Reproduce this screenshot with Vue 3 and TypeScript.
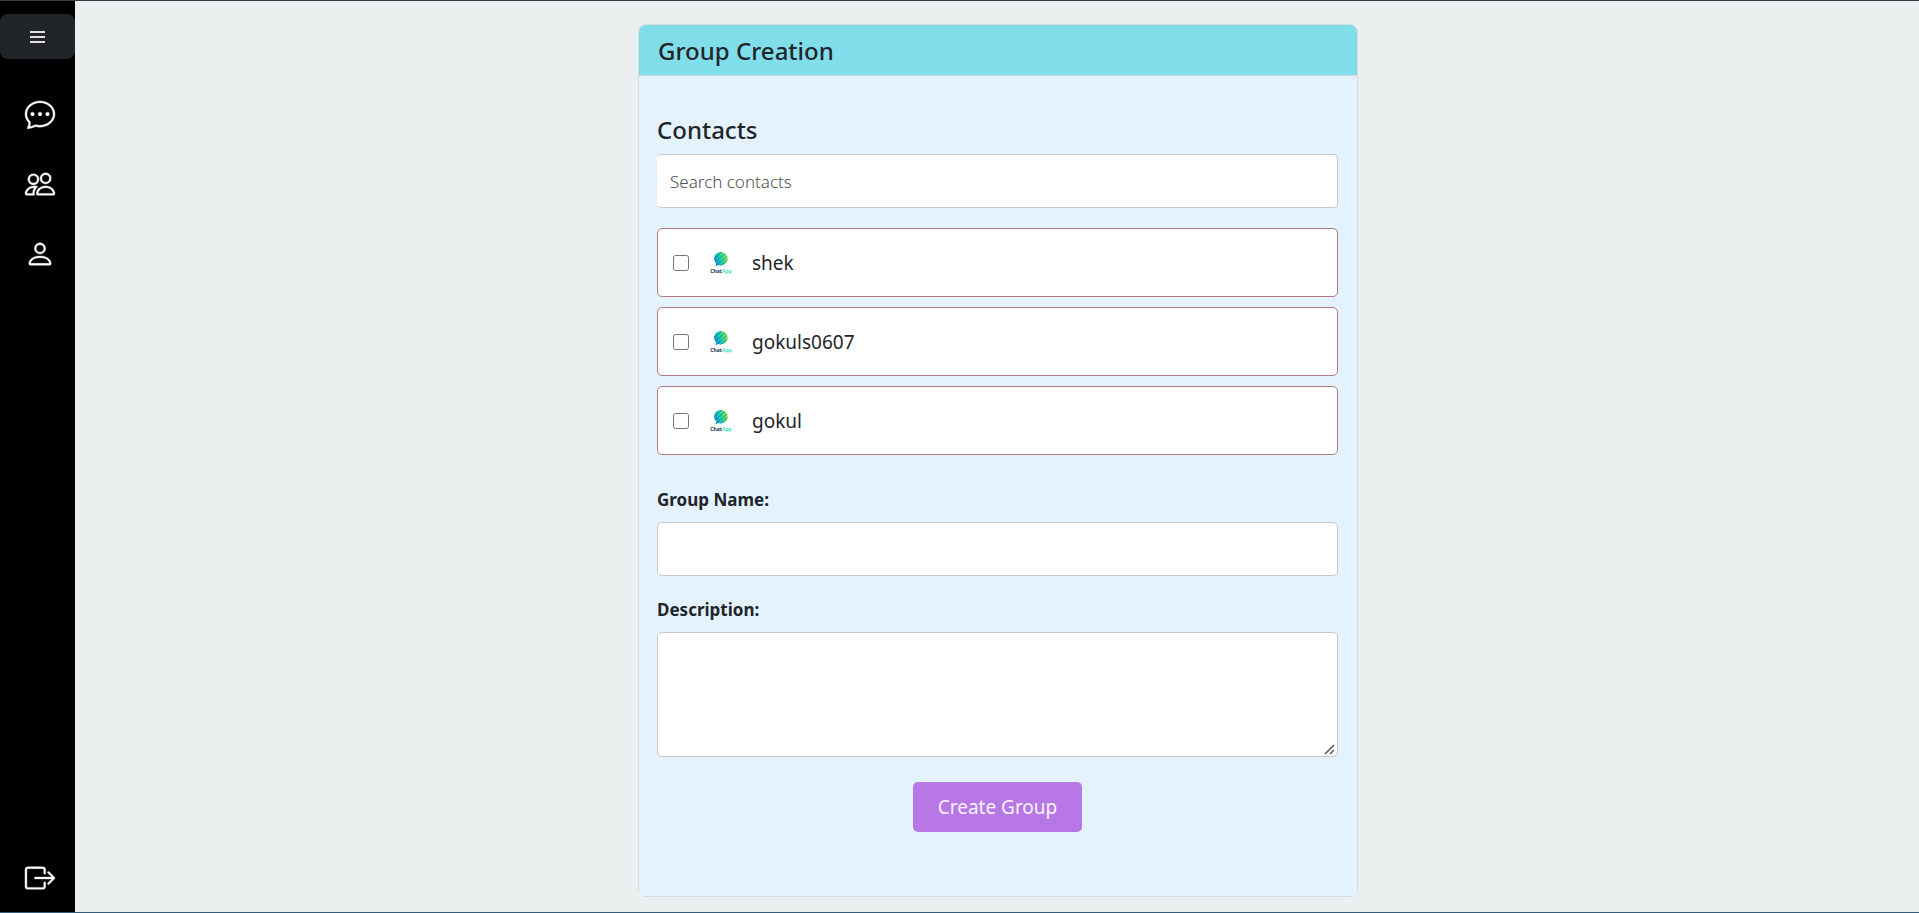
<script setup lang="ts">
import { ref } from 'vue'

interface NavItem {
  label: string
  paths: string[]
}

interface Contact {
  id: number
  name: string
}

const navItems: NavItem[] = [
  {
    label: 'Chats',
    paths: [
      'M5 8a1 1 0 1 1-2 0 1 1 0 0 1 2 0m4 0a1 1 0 1 1-2 0 1 1 0 0 1 2 0m3 1a1 1 0 1 0 0-2 1 1 0 0 0 0 2',
      'm2.165 15.803.02-.004c1.83-.363 2.948-.842 3.468-1.105A9 9 0 0 0 8 15c4.418 0 8-3.134 8-7s-3.582-7-8-7-8 3.134-8 7c0 1.76.743 3.37 1.97 4.6a10.4 10.4 0 0 1-.524 2.318l-.003.011a11 11 0 0 1-.244.637c-.079.186.074.394.273.362a22 22 0 0 0 .693-.125m.8-3.108a1 1 0 0 0-.287-.801C1.618 10.83 1 9.468 1 8c0-3.192 3.004-6 7-6s7 2.808 7 6-3.004 6-7 6a8 8 0 0 1-2.088-.272 1 1 0 0 0-.711.074c-.387.196-1.24.57-2.634.893a11 11 0 0 0 .398-2',
    ],
  },
  {
    label: 'Groups',
    paths: [
      'M15 14s1 0 1-1-1-4-5-4-5 3-5 4 1 1 1 1zm-7.978-1L7 12.996c.001-.264.167-1.03.76-1.72C8.312 10.629 9.282 10 11 10c1.717 0 2.687.63 3.24 1.276.593.69.758 1.457.76 1.72l-.008.002-.014.002zM11 7a2 2 0 1 0 0-4 2 2 0 0 0 0 4m3-2a3 3 0 1 1-6 0 3 3 0 0 1 6 0M6.936 9.28a6 6 0 0 0-1.23-.247A7 7 0 0 0 5 9c-4 0-5 3-5 4q0 1 1 1h4.216A2.24 2.24 0 0 1 5 13c0-1.01.377-2.042 1.09-2.904.243-.294.526-.569.846-.816M4.92 10A5.5 5.5 0 0 0 4 13H1c0-.26.164-1.03.76-1.724.545-.636 1.492-1.256 3.16-1.275ZM1.5 5.5a3 3 0 1 1 6 0 3 3 0 0 1-6 0m3-2a2 2 0 1 0 0 4 2 2 0 0 0 0-4',
    ],
  },
  {
    label: 'Profile',
    paths: [
      'M8 8a3 3 0 1 0 0-6 3 3 0 0 0 0 6m2-3a2 2 0 1 1-4 0 2 2 0 0 1 4 0m4 8c0 1-1 1-1 1H3s-1 0-1-1 1-4 6-4 6 3 6 4m-1-.004c-.001-.246-.154-.986-.832-1.664C11.516 10.68 10.289 10 8 10s-3.516.68-4.168 1.332c-.678.678-.83 1.418-.832 1.664z',
    ],
  },
]

const contacts: Contact[] = [
  { id: 1, name: 'shek' },
  { id: 2, name: 'gokuls0607' },
  { id: 3, name: 'gokul' },
]

const search = ref('')
const selected = ref<number[]>([])
const groupName = ref('')
const description = ref('')
</script>

<template>
  <div class="app">
    <aside class="sidebar">
      <button class="menu" type="button" aria-label="Menu">
        <svg width="15" height="12" viewBox="0 0 15 12" aria-hidden="true">
          <path d="M0 0h15v2H0zM0 5h15v2H0zM0 10h15v2H0z" fill="currentColor" />
        </svg>
      </button>
      <nav class="nav">
        <a v-for="item in navItems" :key="item.label" href="#" :aria-label="item.label">
          <svg class="icon" viewBox="0 0 16 16" aria-hidden="true">
            <path v-for="d in item.paths" :key="d" :d="d" />
          </svg>
        </a>
      </nav>
      <a class="logout" href="#" aria-label="Log out">
        <svg class="icon" viewBox="0 0 16 16" aria-hidden="true">
          <path
            d="M10 12.5a.5.5 0 0 1-.5.5h-8a.5.5 0 0 1-.5-.5v-9a.5.5 0 0 1 .5-.5h8a.5.5 0 0 1 .5.5v2a.5.5 0 0 0 1 0v-2A1.5 1.5 0 0 0 9.500 2h-8A1.500 1.500 0 0 0 0 3.500v9A1.500 1.500 0 0 0 1.500 14h8a1.500 1.500 0 0 0 1.500-1.500v-2a.5.5 0 0 0-1 0z"
          />
          <path
            d="M15.854 8.354a.5.5 0 0 0 0-.708l-3-3a.5.5 0 0 0-.708.708L14.293 7.5H5.5a.5.5 0 0 0 0 1h8.793l-2.147 2.146a.5.5 0 0 0 .708.708z"
          />
        </svg>
      </a>
    </aside>

    <main class="main">
      <section class="card">
        <header class="card-header">
          <h1>Group Creation</h1>
        </header>
        <form class="card-body" @submit.prevent>
          <h2 id="contacts-title">Contacts</h2>
          <input
            v-model="search"
            class="field search"
            type="text"
            placeholder="Search contacts"
            aria-labelledby="contacts-title"
          />
          <ul class="contacts">
            <li v-for="contact in contacts" :key="contact.id">
              <label class="contact">
                <input v-model="selected" type="checkbox" :value="contact.id" />
                <svg class="avatar" viewBox="0 0 24 24" aria-hidden="true">
                  <defs>
                    <linearGradient :id="`ball-${contact.id}`" x1="0" y1="0.7" x2="1" y2="0.4">
                      <stop offset="0" stop-color="#1478ee" />
                      <stop offset="0.45" stop-color="#14d2b8" />
                      <stop offset="1" stop-color="#a8f02c" />
                    </linearGradient>
                    <clipPath :id="`clip-${contact.id}`">
                      <path d="M12 1a6.700 6.700 0 1 1-2.600 12.900L6.600 15.300 7.300 12.600A6.700 6.700 0 0 1 12 1z" />
                    </clipPath>
                  </defs>
                  <g :clip-path="`url(#clip-${contact.id})`">
                    <rect x="4" width="16" height="16" :fill="`url(#ball-${contact.id})`" />
                    <path
                      d="M4 8.500 13 1M5 12 17 2M7 14.500 19 4.500M11 15 20 7.500"
                      stroke="#0a6a80"
                      stroke-width="0.6"
                      fill="none"
                    />
                  </g>
                  <text class="logo-text" x="12" y="22" text-anchor="middle">
                    <tspan fill="#14284b">Chat</tspan><tspan fill="#4be3c0">App</tspan>
                  </text>
                </svg>
                <span class="name">{{ contact.name }}</span>
              </label>
            </li>
          </ul>

          <label class="label" for="group-name">Group Name:</label>
          <input id="group-name" v-model="groupName" class="field" type="text" />

          <label class="label second" for="description">Description:</label>
          <textarea id="description" v-model="description" class="field area"></textarea>

          <button class="create" type="submit">Create Group</button>
        </form>
      </section>
    </main>
  </div>
</template>

<style>
body {
  margin: 0;
  background: #ebeff0;
}
</style>

<style scoped>
.app,
.app * {
  box-sizing: border-box;
}

.app {
  display: flex;
  min-height: 100vh;
  border-top: 1px solid #343d42;
  border-bottom: 1px solid #365a78;
  background: #ebeff0;
  color: #212529;
  font-family: 'Segoe UI', 'Noto Sans', 'Open Sans', sans-serif;
}

.sidebar {
  display: flex;
  flex-direction: column;
  flex: none;
  width: 75px;
  padding: 13px 0 19px;
  background: #000;
  color: #fff;
}

.menu {
  display: flex;
  align-items: center;
  justify-content: center;
  height: 45px;
  padding: 0;
  border: 0;
  border-radius: 8px;
  background: #212529;
  color: #dee0e1;
}

.nav {
  display: flex;
  flex-direction: column;
  gap: 40px;
  margin-top: 40px;
}

.nav a,
.logout {
  display: flex;
  padding-left: 25px;
  color: #fff;
}

.logout {
  margin-top: auto;
}

.icon {
  width: 30px;
  height: 30px;
  fill: currentColor;
  stroke: currentColor;
  stroke-width: 0.2;
  overflow: visible;
}

.main {
  flex: 1;
  padding: 23px 24px 14px 26px;
}

.card {
  max-width: 720px;
  margin: 0 auto;
  border: 1px solid #d6dbde;
  border-radius: 8px;
}

.card-header {
  padding: 9px 19px 7px;
  border-bottom: 1px solid #cdd9dd;
  border-radius: 7px 7px 0 0;
  background: #80deea;
}

h1,
h2 {
  margin: 0;
  font-size: 24px;
  font-weight: 500;
  line-height: 34px;
}

.card-body {
  display: flex;
  flex-direction: column;
  padding: 37px 19px 64px 18px;
  border-radius: 0 0 4px 4px;
  background: #e3f2fd;
}

.field {
  width: 100%;
  height: 54px;
  padding: 0 12px;
  border: 1px solid #c6c8ca;
  border-radius: 5px;
  background: #fff;
  color: #212529;
  font-family: inherit;
  font-size: 17px;
}

.search {
  margin-top: 7px;
  border-left-color: #fff;
}

.search::placeholder {
  color: #4c5155;
  font-weight: 300;
  opacity: 1;
}

.contacts {
  display: flex;
  flex-direction: column;
  gap: 10px;
  margin: 20px 0 0;
  padding: 0;
  list-style: none;
}

.contact {
  display: flex;
  align-items: center;
  height: 69px;
  padding: 0 15px;
  border: 1px solid #b07d7e;
  border-radius: 5px;
  background: #fff;
}

.contact input {
  width: 16px;
  height: 16px;
  margin: 0;
}

.avatar {
  width: 24px;
  height: 24px;
  margin: 0 19px 0 20px;
}

.logo-text {
  font-size: 5px;
  font-weight: 700;
}

.name {
  font-size: 19px;
}

.label {
  margin: 33px 0 10px;
  font-size: 17px;
  font-weight: 700;
  line-height: 24px;
}

.label.second {
  margin-top: 22px;
}

.area {
  display: block;
  height: 125px;
  padding: 12px;
  resize: vertical;
}

.area::-webkit-resizer {
  background: url("data:image/svg+xml,%3Csvg xmlns='http://www.w3.org/2000/svg' width='15' height='15'%3E%3Cpath d='M3 13 12 4M8 13 12 9' stroke='%23555' stroke-width='1.5'/%3E%3C/svg%3E")
    no-repeat right bottom;
}

.create {
  align-self: center;
  height: 50px;
  margin-top: 25px;
  padding: 0 25px;
  border: 0;
  border-radius: 5px;
  background: #b778e6;
  color: #f7f3fd;
  font-family: inherit;
  font-size: 19px;
}
</style>
